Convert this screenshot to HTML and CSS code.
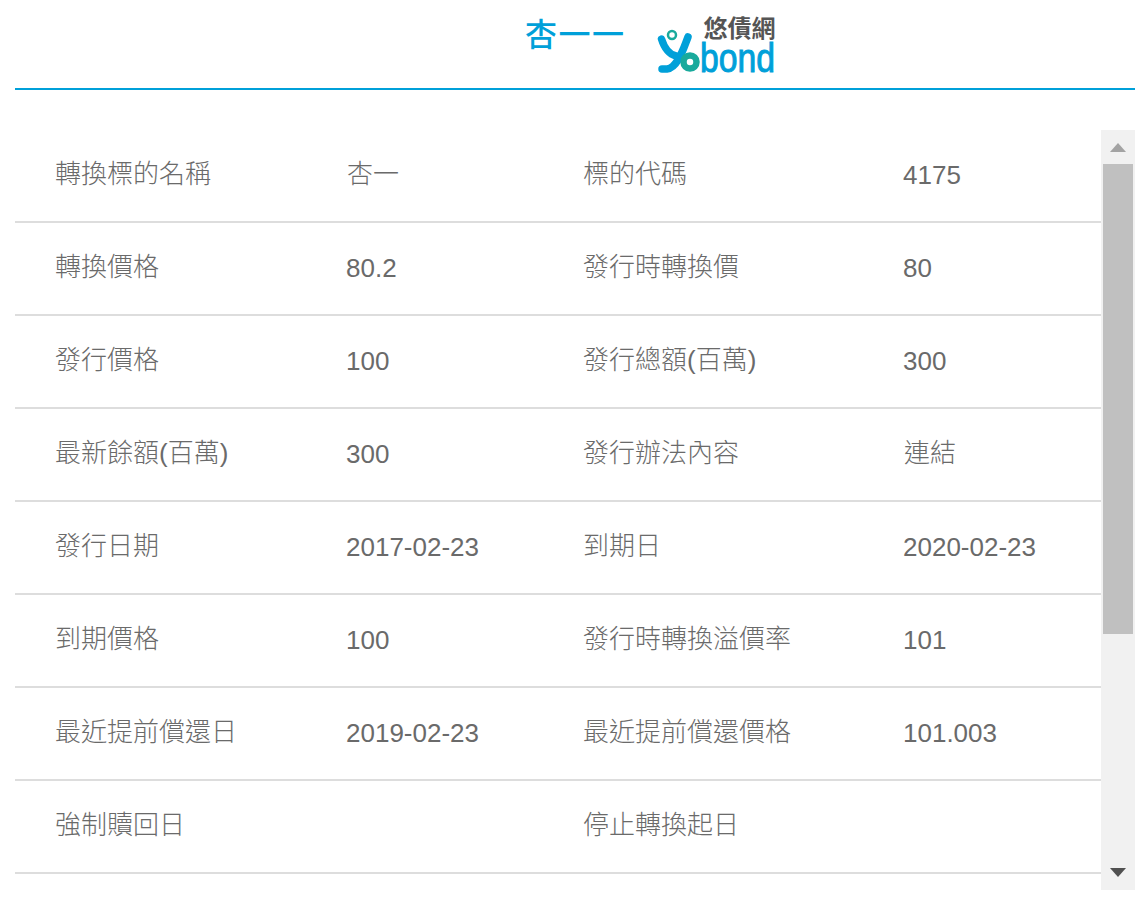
FILE: index.html
```html
<!DOCTYPE html>
<html lang="zh-Hant">
<head>
<meta charset="utf-8">
<title>杏一一</title>
<link rel="stylesheet" href="styles.css">
</head>
<body>
<div class="page">
  <header class="header">
    <h1 class="title">杏一一</h1>
    <svg class="logo" width="140" height="80" viewBox="0 -8 140 80" aria-label="Yobond">
      <text class="logo-zh" x="118.500" y="23" text-anchor="end">悠債網</text>
      <circle class="logo-head" cx="15" cy="21" r="4"/>
      <path class="logo-y" d="M4.500 25 C7 33 11 40 19 42"/>
      <path class="logo-y" d="M31 23 C27 33 21 54 10 55 L5 55"/>
      <circle class="logo-o" cx="33" cy="48" r="6.500"/>
      <text class="logo-en" x="43" y="58" textLength="75" lengthAdjust="spacingAndGlyphs">bond</text>
    </svg>
  </header>
  <div class="panel">
    <div class="table">
      <div class="row"><span class="zh">轉換標的名稱</span><span class="zh zh-value">杏一</span><span class="zh">標的代碼</span><span>4175</span></div>
      <div class="row"><span class="zh">轉換價格</span><span>80.2</span><span class="zh">發行時轉換價</span><span>80</span></div>
      <div class="row"><span class="zh">發行價格</span><span>100</span><span class="zh">發行總額(百萬)</span><span>300</span></div>
      <div class="row"><span class="zh">最新餘額(百萬)</span><span>300</span><span class="zh">發行辦法內容</span><span class="zh zh-value">連結</span></div>
      <div class="row"><span class="zh">發行日期</span><span>2017-02-23</span><span class="zh">到期日</span><span>2020-02-23</span></div>
      <div class="row"><span class="zh">到期價格</span><span>100</span><span class="zh">發行時轉換溢價率</span><span>101</span></div>
      <div class="row"><span class="zh">最近提前償還日</span><span>2019-02-23</span><span class="zh">最近提前償還價格</span><span>101.003</span></div>
      <div class="row"><span class="zh">強制贖回日</span><span></span><span class="zh">停止轉換起日</span><span></span></div>
    </div>
    <div class="scrollbar">
      <div class="arrow"><div class="tri-up"></div></div>
      <div class="track"><div class="thumb"></div></div>
      <div class="arrow arrow-down"><div class="tri-down"></div></div>
    </div>
  </div>
</div>
</body>
</html>
```
FILE: styles.css
```css
* { box-sizing: border-box; }
html, body { margin: 0; padding: 0; background: #fff; }
body {
  height: 897px;
  overflow: hidden;
  font-family: "Liberation Sans", "Noto Sans CJK TC", sans-serif;
}
.page { margin: 0 1px 0 15px; }
.header {
  display: flex;
  height: 90px;
  padding-left: 510px;
  border-bottom: 2px solid #00a0d9;
}
.title {
  margin: 12px 0 0;
  width: 132px;
  font-size: 32px;
  letter-spacing: 1.500px;
  line-height: 40px;
  font-weight: 500;
  color: #00a0d9;
  font-family: "Noto Sans CJK TC", sans-serif;
}
.logo { margin-top: 6px; flex: none; }
.logo-zh {
  font-family: "Noto Sans CJK TC", sans-serif;
  font-size: 24px;
  font-weight: 700;
  fill: #555;
}
.logo-en {
  font-family: "Liberation Sans", sans-serif;
  font-size: 41px;
  fill: #00a0d9;
  stroke: #00a0d9;
  stroke-width: 1;
}
.logo-head { fill: none; stroke: #19aa9c; stroke-width: 2.500; }
.logo-y { fill: none; stroke: #00a0d9; stroke-width: 7.500; stroke-linecap: round; }
.logo-o { fill: none; stroke: #19aa9c; stroke-width: 6.500; }
.panel {
  display: flex;
  margin-top: 40px;
  height: 760px;
}
.table { flex: 1; }
.row {
  display: grid;
  grid-template-columns: 290px 238px 319px 1fr;
  align-items: center;
  height: 93px;
  padding-left: 41px;
  padding-bottom: 2px;
  border-bottom: 2px solid #ddd;
  font-size: 26px;
  line-height: 30px;
  color: #6a6a6a;
}
.zh {
  font-weight: 300;
  margin-left: -1px;
  margin-bottom: 1px;
}
.zh-value { margin-left: 1px; }
.scrollbar {
  display: flex;
  flex-direction: column;
  width: 34px;
  background: #f1f1f1;
}
.arrow {
  display: flex;
  justify-content: center;
  align-items: flex-start;
  height: 34px;
  padding-top: 13px;
}
.arrow-down { padding-top: 12px; }
.tri-up {
  border-left: 8px solid transparent;
  border-right: 8px solid transparent;
  border-bottom: 9px solid #a3a3a3;
}
.tri-down {
  border-left: 8px solid transparent;
  border-right: 8px solid transparent;
  border-top: 9px solid #505050;
}
.track { flex: 1; padding: 0 2px; }
.thumb { height: 470px; background: #c0c0c0; }
```
